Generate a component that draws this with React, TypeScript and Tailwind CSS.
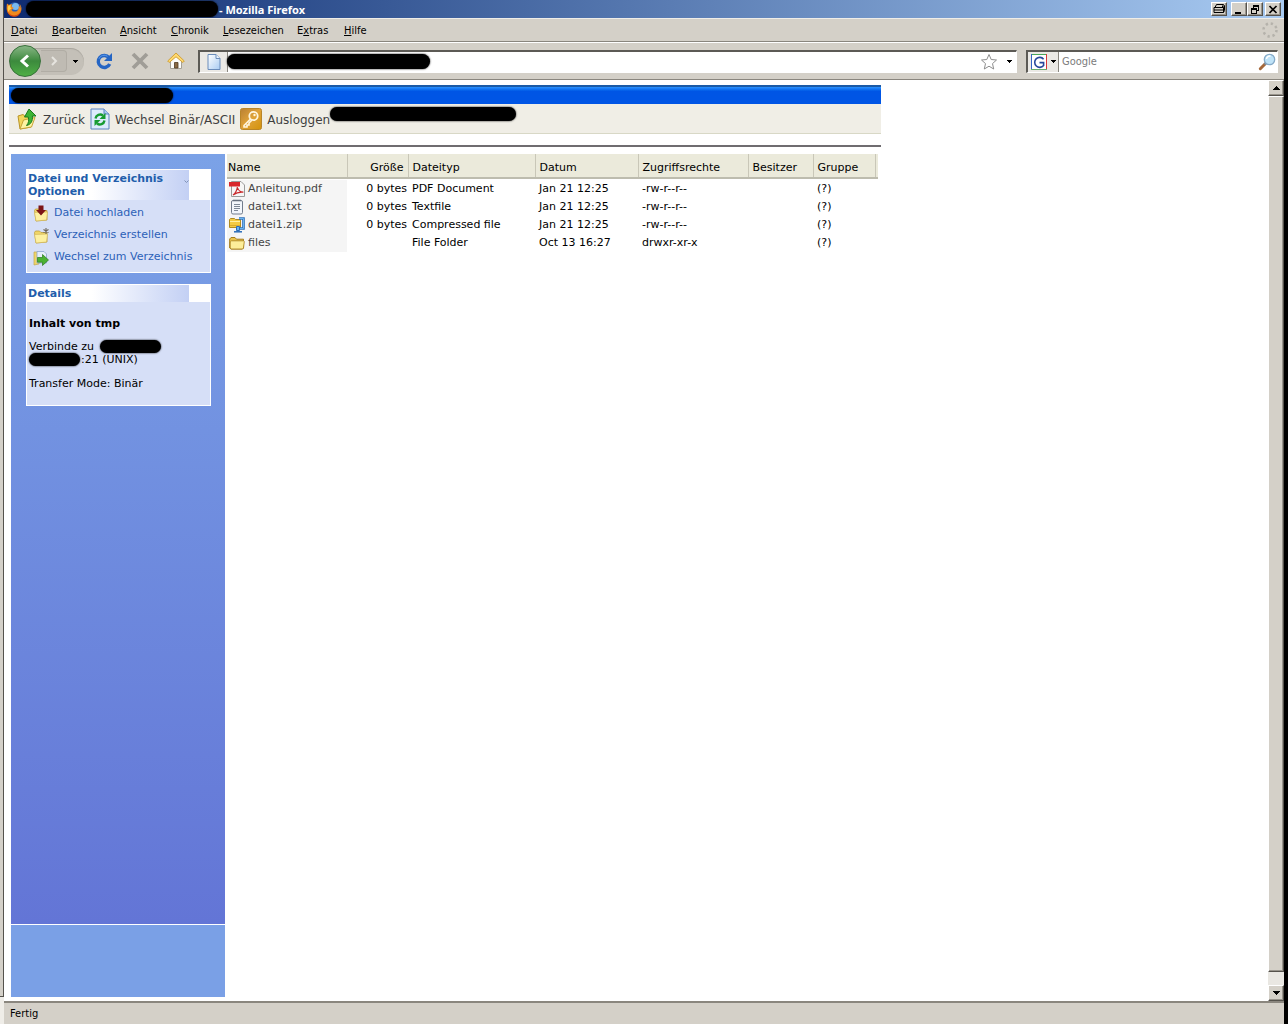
import React from 'react';

const menuItems: { label: string; key: number; width: string }[] = [
  { label: 'Datei', key: 0, width: 'w-[41px]' },
  { label: 'Bearbeiten', key: 0, width: 'w-[68px]' },
  { label: 'Ansicht', key: 0, width: 'w-[51px]' },
  { label: 'Chronik', key: 0, width: 'w-[52px]' },
  { label: 'Lesezeichen', key: 0, width: 'w-[74px]' },
  { label: 'Extras', key: 1, width: 'w-[47px]' },
  { label: 'Hilfe', key: 0, width: 'w-[38px]' },
];

const Redaction = ({ className }: { className: string }) => (
  <span aria-hidden="true" className={`block rounded-full bg-black shadow-[0_0_2px_#000] ${className}`} />
);

const FirefoxIcon = () => (
  <svg viewBox="0 0 16 16" className="size-4 shrink-0">
    <circle cx="8.5" cy="7.5" r="6.3" fill="#2a5fb4" />
    <circle cx="9.5" cy="5.5" r="3.6" fill="#79b9ee" />
    <path d="M1 2.5 3 4C4 3 5 3 6.200 3.600 5 5 5.600 6.300 7.600 6.600 7.400 8 5.800 8.600 5.400 8.400c1 2.400 4.200 3 6.200 1 1.300-1.300 1.400-3.400.8-4.600 1.800.8 1.800 2 1.600 3C14.600 6.200 14.300 4 13.300 2.700 16 5 16.200 9.600 13.700 12.600 10.800 16 5.200 15.800 2.300 12.400.4 10.200.3 6 1 2.500Z" fill="#f08a1c" />
    <path d="M1 8c.6 4 4 6.600 7.600 6.400 3-.2 5.400-2.200 6.200-5-.2 4-3.600 6.600-7.200 6.400C3.600 15.400 1 12 1 8Z" fill="#d9480f" />
    <path d="M2 5.500c1-1.200 2-1.300 3-1-1 1.200-.8 2.600.6 3.200-2 .4-3 1.600-2.600 3.600C1.800 9.800 1.500 7.500 2 5.500Z" fill="#ffd04a" />
  </svg>
);

const ReloadIcon = () => (
  <svg viewBox="0 0 18 18" className="size-[18px]">
    <path d="M14 5.800A6 6 0 1 0 14.700 12" fill="none" stroke="#2565c4" strokeWidth="3.400" />
    <path d="M17 1v8H9l3-3Z" fill="#2565c4" />
    <path d="M12.500 4.300A5.500 5.500 0 0 0 4 6.800" fill="none" stroke="#5f9bea" strokeWidth="1" />
  </svg>
);

const StopIcon = () => (
  <svg viewBox="0 0 18 18" className="size-[18px]">
    <path d="M2 2 16 16M16 2 2 16" stroke="#a09d97" strokeWidth="3.800" />
  </svg>
);

const HomeIcon = () => (
  <svg viewBox="0 0 18 18" className="size-[18px]">
    <path d="M3.500 8.500 9 4l5.500 4.500V16.500h-11Z" fill="#fdfdfb" stroke="#a5a196" />
    <path d="M7.500 10.500h3.500V16H7.500Z" fill="#8a6a45" stroke="#4e3a22" strokeWidth=".8" />
    <path d="M9 1 .7 9l1.500 1.500L9 4.800l6.800 5.700 1.500-1.500Z" fill="#ffd970" stroke="#cf9c2e" strokeWidth=".9" strokeLinejoin="round" />
  </svg>
);

const PageIcon = () => (
  <svg viewBox="0 0 14 16" className="h-4 w-3.5">
    <defs>
      <linearGradient id="page" x2="1" y2="1">
        <stop stopColor="#ffffff" />
        <stop offset="1" stopColor="#a9ccf3" />
      </linearGradient>
    </defs>
    <path d="M1 .5h8L13 4.500v11H1Z" fill="url(#page)" stroke="#6a8cba" />
    <path d="M9 .5v4h4" fill="#e9f3ff" stroke="#6a8cba" />
  </svg>
);

const StarIcon = () => (
  <svg viewBox="0 0 18 18" className="size-[18px]">
    <path d="m9 1.500 2.200 5 5.300.5-4 3.600 1.200 5.400L9 13.200 4.300 16l1.200-5.400-4-3.600 5.300-.5Z" fill="#fff" stroke="#8e8e8e" strokeLinejoin="round" />
  </svg>
);

const DownArrow = () => (
  <svg viewBox="0 0 7 4" className="h-1 w-[7px] shrink-0" shapeRendering="crispEdges">
    <path d="M0 0h7L3.500 4Z" fill="#000" />
  </svg>
);

const SmallArrow = () => (
  <svg viewBox="0 0 5 3" className="h-[3px] w-[5px] shrink-0" shapeRendering="crispEdges">
    <path d="M0 0h5L2.500 3Z" fill="#000" />
  </svg>
);

const GoogleIcon = () => (
  <svg viewBox="0 0 16 16" className="size-4">
    <path d="M0 0h16v16H0Z" fill="#fff" />
    <path d="M0 .5h16" stroke="#4aa85a" />
    <path d="M.5 0v16" stroke="#3564c4" />
    <path d="M15.500 0v16" stroke="#d8383a" />
    <path d="M0 15.500h16" stroke="#67ad6b" />
    <path d="M12.600 5.200A5 5 0 1 0 12.600 11.500V8.600H8.500" fill="none" stroke="#26479b" strokeWidth="1.600" />
  </svg>
);

const MagnifierIcon = () => (
  <svg viewBox="0 0 18 18" className="size-[18px]">
    <path d="M7.500 10.500 2.300 15.700" stroke="#a5683a" strokeWidth="3" strokeLinecap="round" />
    <path d="M8.500 9.500 6.500 11.500" stroke="#7c8b98" strokeWidth="2" />
    <circle cx="11.500" cy="6.500" r="5.200" fill="#bfe3f8" stroke="#86abc9" strokeWidth="1.300" />
    <path d="M8.500 6a3.200 3.200 0 0 1 4-2.800" stroke="#fff" strokeWidth="1.500" fill="none" />
  </svg>
);

const BackFolderIcon = () => (
  <svg viewBox="0 0 22 22" className="size-[22px]">
    <path d="M2 8l5-1.500 2 1.800L15 7v12L4 21Z" fill="#f3d65c" stroke="#b99428" />
    <path d="M4 21 7.500 12 19 9.500 15.500 19Z" fill="#fdf3a3" stroke="#c6a437" />
    <path d="M13 1 20 8h-3.600c.5 5-1.400 8.600-5.900 9.500 2.300-2.500 2.600-5.500 1.700-8.500H8.500Z" fill="#3db435" stroke="#1c7a1b" strokeLinejoin="round" />
  </svg>
);

const SwitchIcon = () => (
  <svg viewBox="0 0 20 22" className="h-[22px] w-5">
    <path d="M1 1h13l5 5v15H1Z" fill="#dcebfd" stroke="#5b83c0" />
    <path d="M14 1v5h5" fill="#a9c8f0" stroke="#5b83c0" />
    <path d="M5.500 10.500A4.700 4.700 0 0 1 13 7.500" fill="none" stroke="#169b32" strokeWidth="2.400" />
    <path d="M15.500 5v6h-6Z" fill="#169b32" />
    <path d="M14.500 12.500A4.700 4.700 0 0 1 7 15.500" fill="none" stroke="#169b32" strokeWidth="2.400" />
    <path d="M4.500 18v-6h6Z" fill="#169b32" />
  </svg>
);

const KeyIcon = () => (
  <svg viewBox="0 0 22 22" className="size-[22px]">
    <defs>
      <linearGradient id="key" x2="1" y2="1">
        <stop stopColor="#b98033" />
        <stop offset=".5" stopColor="#e0a339" />
        <stop offset="1" stopColor="#d39208" />
      </linearGradient>
    </defs>
    <rect x=".5" y=".5" width="21" height="21" rx="2" fill="url(#key)" stroke="#b98528" />
    <circle cx="13.500" cy="8" r="4.200" fill="none" stroke="#fff6df" strokeWidth="1.800" />
    <circle cx="14.500" cy="7" r="1.200" fill="#fff6df" />
    <path d="M10.500 11 4 17.500V19h3v-2h2v-2l3-3" fill="none" stroke="#fff6df" strokeWidth="1.600" />
  </svg>
);

const FolderBase = () => (
  <>
    <path d="M1.500 5.500 2.500 4h4l1.500 1.500h6V15L3 16Z" fill="#f0d568" stroke="#bf9f3c" strokeWidth=".8" />
    <path d="M1.500 7.500 14.500 7 13.500 15 3 16Z" fill="#fdf0a0" stroke="#cfb256" strokeWidth=".6" />
  </>
);

const UploadIcon = () => (
  <svg viewBox="0 0 16 17" className="h-[17px] w-4 shrink-0">
    <FolderBase />
    <path d="M5.500.5h5V5H13L8 10.500 3 5h2.500Z" fill="#7c1517" />
  </svg>
);

const NewFolderIcon = () => (
  <svg viewBox="0 0 16 17" className="h-[17px] w-4 shrink-0">
    <FolderBase />
    <path d="M13 1v6M10.500 2.500l5 3M15.500 2.500l-5 3" stroke="#6c6558" strokeWidth="1.100" />
  </svg>
);

const GoFolderIcon = () => (
  <svg viewBox="0 0 16 17" className="h-[17px] w-4 shrink-0">
    <path d="M1 3h4l1 1.500V15L1 16Z" fill="#f0d568" stroke="#c2a94e" strokeWidth=".7" />
    <path d="M4 2.500h7l2.500 2.500V14H4Z" fill="#e6eefb" stroke="#8ba6cf" strokeWidth=".8" />
    <path d="M4.500 8.500h5V5.500L15.500 11 9.500 16.500V13.200h-5Z" fill="#4bb233" stroke="#2a7a1d" strokeWidth=".7" />
  </svg>
);

const PdfIcon = () => (
  <svg viewBox="0 0 16 16" className="size-4 shrink-0">
    <path d="M2.500.5H12L15.500 4v11.500h-13Z" fill="#f6f6f6" stroke="#9a9a9a" />
    <path d="M0 1h11v4.500H0Z" fill="#d8262b" />
    <path d="M4 14c2-1.500 4-5 4.400-8 .6 3 2.600 5 6 5.200-3.400-.4-7.400.6-10.400 2.800Z" fill="none" stroke="#c9292c" strokeWidth="1.200" />
  </svg>
);

const TextIcon = () => (
  <svg viewBox="0 0 16 16" className="size-4 shrink-0">
    <rect x="2.500" y="1.500" width="11" height="13.500" rx="1.500" fill="#f2f6fb" stroke="#717c8c" />
    <path d="M5 .5v2M7 .5v2M9 .5v2M11 .5v2" stroke="#5b6470" />
    <path d="M5 5.500h6M5 7.500h6M5 9.500h6M5 11.500h4" stroke="#7d8896" />
  </svg>
);

const ZipIcon = () => (
  <svg viewBox="0 0 16 16" className="size-4 shrink-0">
    <path d="M.5 2.500 1.500 1.500h4l1 1h5v8H.5Z" fill="#f3cb43" stroke="#b08b20" />
    <path d="M1 4.500h10" stroke="#fdf0a5" />
    <path d="M1 8.500h10" stroke="#d9ac2f" />
    <path d="M10 1.500h4.500v10H10" fill="none" stroke="#2b6cb8" strokeWidth="2.600" />
    <path d="M10 1.500h4.500v10H10" fill="none" stroke="#69b4ee" strokeWidth="1" />
    <path d="M7.500 9.500h3v4h-3Z" fill="#69b4ee" stroke="#2b6cb8" />
    <path d="M5 14.800h8" stroke="#2b6cb8" strokeWidth="1.500" />
  </svg>
);

const FolderIcon = () => (
  <svg viewBox="0 0 16 16" className="size-4 shrink-0">
    <path d="M.7 13V4L2 2.500h4L7.500 4.200h7V13l-1 1H2Z" fill="#e9c34c" stroke="#a57c1b" />
    <path d="M1.200 7 2.500 5.800h12l.8.800L14.500 13l-1 1H2l-.8-1Z" fill="#fdee9a" stroke="#a57c1b" strokeWidth=".8" />
  </svg>
);

const files = [
  { icon: <PdfIcon />, name: 'Anleitung.pdf', size: '0 bytes', type: 'PDF Document', date: 'Jan 21 12:25', rights: '-rw-r--r--' },
  { icon: <TextIcon />, name: 'datei1.txt', size: '0 bytes', type: 'Textfile', date: 'Jan 21 12:25', rights: '-rw-r--r--' },
  { icon: <ZipIcon />, name: 'datei1.zip', size: '0 bytes', type: 'Compressed file', date: 'Jan 21 12:25', rights: '-rw-r--r--' },
  { icon: <FolderIcon />, name: 'files', size: '', type: 'File Folder', date: 'Oct 13 16:27', rights: 'drwxr-xr-x' },
];

const columns = [
  { label: 'Name', className: 'w-[120px] pl-px text-left' },
  { label: 'Größe', className: 'w-[61px] pr-1 text-right' },
  { label: 'Dateityp', className: 'w-[127px] pl-1 text-left' },
  { label: 'Datum', className: 'w-[103px] pl-1 text-left' },
  { label: 'Zugriffsrechte', className: 'w-[110px] pl-1 text-left' },
  { label: 'Besitzer', className: 'w-[65px] pl-1 text-left' },
  { label: 'Gruppe', className: 'w-[62px] pl-1 text-left' },
];

const BEVEL =
  'flex items-center justify-center border border-t-white border-l-white border-r-[#55524c] border-b-[#55524c] bg-[#d4d0c8] shadow-[inset_-1px_-1px_0_#98948c]';

function TitleBar() {
  return (
    <header className="flex h-[18px] shrink-0 items-center bg-linear-to-r from-[#0f2b70] to-[#a9cbf2] pr-[3px] pl-0.5">
      <FirefoxIcon />
      <Redaction className="ml-1 h-4 w-[192px] shrink-0" />
      <h1 className="ml-px pt-px font-['Noto_Sans',sans-serif] text-[11px] leading-4 font-bold whitespace-nowrap text-white">- Mozilla Firefox</h1>
      <div className="ml-auto flex">
        <button aria-label="Drucken" className={`${BEVEL} mr-1 h-[14px] w-4`}>
          <svg viewBox="0 0 12 10" className="h-2.5 w-3">
            <path d="M3.500.5h7l-1.500 3h-7ZM1 3.500h9.500v5H1ZM1 6h9.500M10.500 3.500l1-2v5l-1 2" fill="none" stroke="#000" />
          </svg>
        </button>
        <button aria-label="Minimieren" className={`${BEVEL} h-[14px] w-4`}>
          <svg viewBox="0 0 10 9" className="h-[9px] w-2.5"><path d="M1 7h6v2H1Z" fill="#000" /></svg>
        </button>
        <button aria-label="Wiederherstellen" className={`${BEVEL} mr-0.5 h-[14px] w-4`}>
          <svg viewBox="0 0 10 9" className="h-[9px] w-2.5" shapeRendering="crispEdges">
            <path d="M3 0h6v6H7V5h1V2H4v1H3Z" fill="#000" />
            <path d="M1 3h6v6H1ZM2 5v3h4V5Z" fill="#000" fillRule="evenodd" />
          </svg>
        </button>
        <button aria-label="Schließen" className={`${BEVEL} h-[14px] w-4`}>
          <svg viewBox="0 0 10 9" className="h-[9px] w-2.5"><path d="M1.500 1 8.500 8M8.500 1 1.500 8" stroke="#000" strokeWidth="1.700" /></svg>
        </button>
      </div>
    </header>
  );
}

function MenuBar() {
  return (
    <nav aria-label="Menü" className="flex h-6 shrink-0 items-center border-t border-b border-t-[#efede8] border-b-[#8a867e] pl-[7px] text-[11px] text-black">
      {menuItems.map((m) => (
        <button key={m.label} className={`${m.width} pt-[3px] text-left whitespace-nowrap`}>
          {m.label.slice(0, m.key)}
          <span className="underline underline-offset-1">{m.label[m.key]}</span>
          {m.label.slice(m.key + 1)}
        </button>
      ))}
      <svg viewBox="0 0 16 16" className="mr-1.5 ml-auto size-4">
        <circle cx="8" cy="8" r="6.500" fill="none" stroke="#b5b2ab" strokeWidth="2.500" strokeDasharray="2.300 2.800" />
      </svg>
    </nav>
  );
}

function NavBar() {
  return (
    <div className="flex h-[38px] shrink-0 items-center border-t border-b border-t-white border-b-[#8a867e] pr-1.5 pl-[5px]">
      <div className="flex h-[27px] w-[75px] items-center rounded-full bg-[#c4c0b8] shadow-[inset_0_1px_1px_#a9a59d]">
        <button aria-label="Zurück" className="flex size-8 shrink-0 items-center justify-center rounded-full border border-[#37713a] bg-linear-to-b from-[#86b584] via-[#3c8a3d] to-[#4faf45]">
          <svg viewBox="0 0 16 16" className="size-4"><path d="M11 2.500 5 8l6 5.500" fill="none" stroke="#fff" strokeWidth="3" /></svg>
        </button>
        <button aria-label="Vor" className="flex h-[22px] w-[26px] items-center justify-center rounded-r-sm border border-l-0 border-[#b1ada5] bg-[#bfbbb3]">
          <svg viewBox="0 0 10 10" className="size-2.5"><path d="M3 1 7 5 3 9" fill="none" stroke="#e6e4df" strokeWidth="2" /></svg>
        </button>
        <button aria-label="Verlauf" className="flex h-full w-[17px] items-center justify-center"><SmallArrow /></button>
      </div>
      <button aria-label="Neu laden" className="ml-[11px]"><ReloadIcon /></button>
      <button aria-label="Stopp" className="ml-[18px]"><StopIcon /></button>
      <button aria-label="Startseite" className="ml-[18px]"><HomeIcon /></button>
      <div className="relative ml-[13px] flex h-[23px] min-w-0 flex-1 border border-t-2 border-l-2 border-t-[#5c5a55] border-r-white border-b-white border-l-[#5c5a55] bg-white">
        <span className="flex w-7 shrink-0 items-center justify-center border-r border-[#8a8780] bg-[#ebe9e5]"><PageIcon /></span>
        <input aria-label="Adresse" className="min-w-0 flex-1 bg-transparent px-1 text-[11px] outline-none" />
        <Redaction className="absolute top-0.5 left-[27px] h-[15px] w-[203px]" />
        <button aria-label="Lesezeichen hinzufügen" className="mr-[9px]"><StarIcon /></button>
        <button aria-label="Adressliste" className="mr-1"><SmallArrow /></button>
      </div>
      <div className="ml-[9px] flex h-[23px] w-[252px] border border-t-2 border-l-2 border-t-[#5c5a55] border-r-white border-b-white border-l-[#5c5a55] bg-white">
        <button aria-label="Suchmaschine" className="flex w-[31px] shrink-0 items-center justify-center gap-1 border-r border-[#8a8780] bg-[#ebe9e5]">
          <GoogleIcon />
          <SmallArrow />
        </button>
        <input aria-label="Suche" placeholder="Google" className="min-w-0 flex-1 bg-transparent px-[3px] pt-0.5 text-[11px] outline-none placeholder:text-[#7b7b7b]" />
        <button aria-label="Suchen" className="mr-px"><MagnifierIcon /></button>
      </div>
    </div>
  );
}

function ScrollBar() {
  return (
    <div className="flex w-4 shrink-0 flex-col bg-[#e9e7e2]">
      <button aria-label="Nach oben" className={`${BEVEL} h-4 w-full`}>
        <svg viewBox="0 0 7 4" className="h-1 w-[7px]" shapeRendering="crispEdges"><path d="M0 4h7L3.500 0Z" /></svg>
      </button>
      <div className={`${BEVEL} w-full flex-1`} />
      <div className="h-[13px]" />
      <button aria-label="Nach unten" className={`${BEVEL} h-4 w-full`}><DownArrow /></button>
    </div>
  );
}

function Panel({ title, toggle, children }: { title: React.ReactNode; toggle?: boolean; children: React.ReactNode }) {
  return (
    <section className="border border-white bg-white">
      <div className="mr-[21px] flex items-start justify-between bg-linear-to-r from-white from-40% to-[#c3d0f4] py-0.5 pl-px">
        <h2 className="text-[11px] leading-[13px] font-bold text-[#215dab]">{title}</h2>
        {toggle && (
          <svg viewBox="0 0 5 3" className="mt-2 h-[3px] w-[5px]"><path d="M.5.5 2.500 2.500 4.500.5" fill="none" stroke="#8093b5" /></svg>
        )}
      </div>
      <div className="bg-[#d6dff7]">{children}</div>
    </section>
  );
}

function Sidebar() {
  return (
    <aside className="ml-0.5 flex w-[214px] shrink-0 flex-col">
      <div className="flex flex-1 flex-col gap-[11px] bg-linear-to-b from-[#7ba2e7] to-[#6375d6] pt-[15px] pr-[14px] pl-[15px]">
        <Panel toggle title={<>Datei und Verzeichnis<br />Optionen</>}>
          <ul className="px-1.5 pt-0.5 pb-1 text-[11px] text-[#2c5fb8]">
            <li className="h-[22px]"><a href="#upload" className="flex h-full items-center gap-[5px] whitespace-nowrap"><UploadIcon />Datei hochladen</a></li>
            <li className="h-[22px]"><a href="#mkdir" className="flex h-full items-center gap-[5px] whitespace-nowrap"><NewFolderIcon />Verzeichnis erstellen</a></li>
            <li className="h-[22px]"><a href="#chdir" className="flex h-full items-center gap-[5px] whitespace-nowrap"><GoFolderIcon />Wechsel zum Verzeichnis</a></li>
          </ul>
        </Panel>
        <Panel title="Details">
          <div className="px-0.5 pt-[15px] pb-[15px] text-[11px] leading-[13px] text-black">
            <p className="font-bold">Inhalt von tmp</p>
            <p className="mt-[10px] flex items-center gap-1.5">Verbinde zu <Redaction className="h-[13px] w-[61px]" /></p>
            <p className="flex items-center gap-px"><Redaction className="h-[13px] w-[51px]" />:21 (UNIX)</p>
            <p className="mt-[11px]">Transfer Mode: Binär</p>
          </div>
        </Panel>
      </div>
      <div className="h-[73px] shrink-0 border-t border-white bg-[#7aa0e6]" />
    </aside>
  );
}

function FileTable() {
  return (
    <table className="table-fixed self-start border-collapse text-[11px] whitespace-nowrap text-black">
      <thead>
        <tr className="h-6 border-b-2 border-[#bdbcae] bg-[#ebeadb]">
          {columns.map((c) => (
            <th key={c.label} className={`border-r border-r-[#c9c7b8] pt-1.5 font-normal ${c.className}`}>{c.label}</th>
          ))}
          <th aria-hidden="true" className="w-[3px] p-0" />
        </tr>
      </thead>
      <tbody>
        <tr aria-hidden="true" className="h-0.5"><td className="p-0" /></tr>
        {files.map((f) => (
          <tr key={f.name} className="h-[18px]">
            <td className="bg-[#f5f5f5] p-0 pl-0.5">
              <a href={`#${f.name}`} className="flex h-[18px] items-center gap-[3px] text-[#454545]">{f.icon}<span className="pt-px">{f.name}</span></a>
            </td>
            <td className="p-0 pt-px pr-px text-right">{f.size}</td>
            <td className="p-0 pt-px pl-1">{f.type}</td>
            <td className="p-0 pt-px pl-1">{f.date}</td>
            <td className="p-0 pt-px pl-1">{f.rights}</td>
            <td className="p-0" />
            <td className="p-0 pt-px pl-1">(?)</td>
          </tr>
        ))}
      </tbody>
    </table>
  );
}

function Page() {
  return (
    <main className="flex min-w-0 flex-1 flex-col bg-white pt-[5px] pb-1 pl-[5px] font-['DejaVu_Sans',sans-serif]">
      <div className="max-w-[872px]">
        <div className="flex h-[19px] items-center border-t-2 border-[#1b5aa6] bg-linear-to-b from-[#2c92ff] via-[#0055e5] via-25% to-[#0055e5] pl-0.5">
          <Redaction className="h-[15px] w-[162px]" />
        </div>
        <div className="flex h-[30px] items-center border-b border-[#d8d8c6] bg-[#f0eee6] pl-[7px] text-xs whitespace-nowrap text-[#3f3f3f]">
          <a href="#back" className="flex items-center gap-[5px]"><BackFolderIcon /><span className="pt-0.5">Zurück</span></a>
          <a href="#mode" className="ml-[5px] flex items-center gap-[5px]"><SwitchIcon /><span className="pt-0.5">Wechsel Binär/ASCII</span></a>
          <a href="#logout" className="ml-[5px] flex items-center gap-[5px]"><KeyIcon /><span className="pt-0.5">Ausloggen</span></a>
          <Redaction className="mb-[10px] h-[14px] w-[186px]" />
        </div>
        <hr className="mt-[11px] border-t-2 border-[#6f6c70]" />
      </div>
      <div className="mt-[7px] flex flex-1 gap-0.5">
        <Sidebar />
        <FileTable />
      </div>
    </main>
  );
}

export default function App() {
  return (
    <div className="flex h-screen overflow-hidden bg-black pr-1 font-['DejaVu_Sans_Condensed','DejaVu_Sans',sans-serif]">
      <div className="flex w-1 shrink-0 flex-col bg-[#efede8]">
        <div className="flex-1 border-r border-[#55524c] bg-[#d4d0c8]" />
        <div className="h-7 border-t border-[#55524c]" />
      </div>
      <div className="flex min-w-0 flex-1 flex-col bg-[#d4d0c8]">
        <TitleBar />
        <MenuBar />
        <NavBar />
        <div className="flex min-h-0 flex-1">
          <Page />
          <ScrollBar />
        </div>
        <footer className="flex h-[23px] shrink-0 items-center border-t-2 border-[#8a867e] px-1.5 pt-0.5 text-[11px] text-black">Fertig</footer>
      </div>
    </div>
  );
}
